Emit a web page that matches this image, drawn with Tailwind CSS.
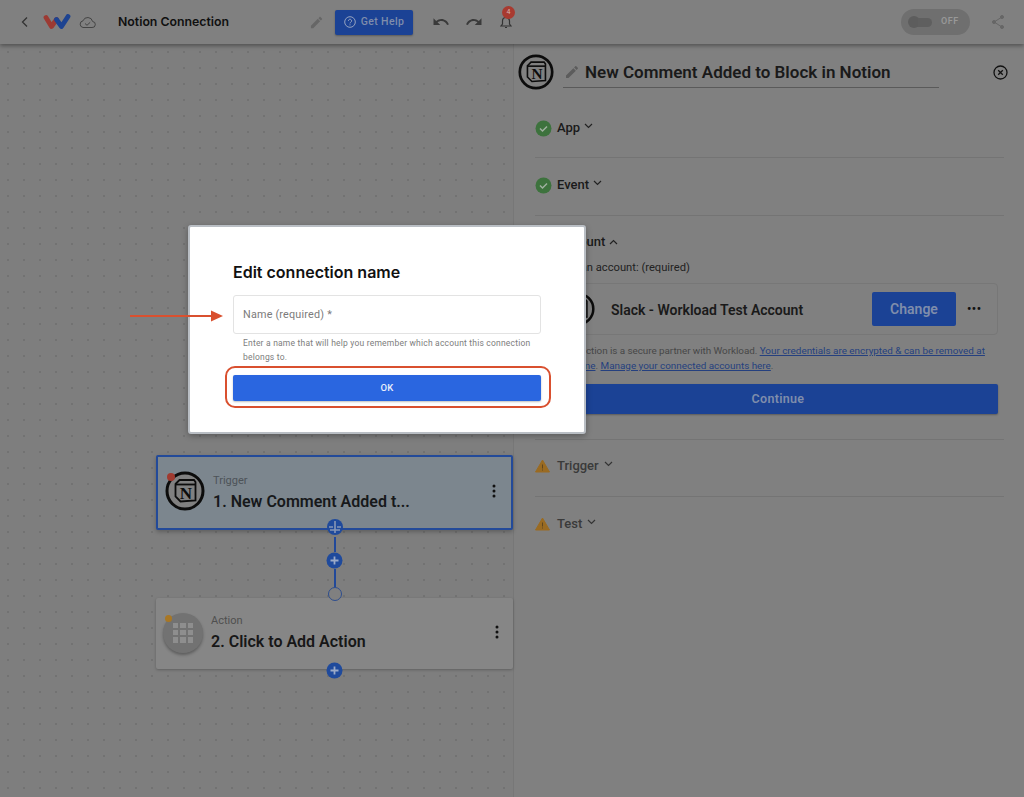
<!DOCTYPE html>
<html>
<head>
<meta charset="utf-8">
<script src="https://cdn.jsdelivr.net/npm/@tailwindcss/browser@4"></script>
</head>
<body class="bg-[#808080]">
<svg class="hidden"><symbol id="notion" viewBox="0 0 40 40"><circle cx="20" cy="20" r="18" fill="#808080" stroke="#0c0c0c" stroke-width="3"/><path d="M10.500 13l4-4h14.500l1.500 2v18.500l-15 1-5-5z" fill="none" stroke="#0c0c0c" stroke-width="1.800"/><path d="M11 13.500h19" stroke="#0c0c0c" stroke-width="1.800"/><text x="21" y="27.500" text-anchor="middle" font-family="Liberation Serif" font-weight="700" font-size="17" fill="#0c0c0c">N</text></symbol></svg>
<div class="relative w-[1024px] h-[797px] overflow-hidden bg-[#808080] font-['Roboto',sans-serif]">

  <header class="relative z-10 h-[44px] flex items-center bg-[#808080] shadow-[0_2px_4px_rgba(0,0,0,0.35)]">
    <svg class="ml-[20px] w-[10px] h-[12px]" viewBox="0 0 10 12" fill="none" stroke="#333" stroke-width="1.300"><path d="M7 1.500L2.500 6 7 10.500"/></svg>
    <svg class="ml-[13px] w-[28px] h-[16px]" viewBox="0 0 28 16" fill="none" stroke-width="4.800" stroke-linejoin="round" stroke-linecap="round"><path d="M3 3.500l5.500 9 5-7" stroke="#9c3a33"/><path d="M13.500 5.500l5 7 6.500-10" stroke="#1d4391"/></svg>
    <svg class="ml-[8px] w-[17px] h-[13px]" viewBox="0 0 17 13" fill="none" stroke="#444" stroke-width="1"><path d="M4 11.500h9a3 3 0 0 0 .6-6A5 5 0 0 0 4 4.800a3.400 3.400 0 0 0 0 6.700z"/><path d="M6 7.500l2 1.800 3.200-3"/></svg>
    <div class="ml-[22px] w-[189px] text-[12.300px] leading-none font-semibold text-[#101010] font-['Inter',sans-serif]">Notion Connection</div>
    <svg class="ml-[2px] w-[15px] h-[15px]" viewBox="0 0 24 24" fill="#666"><path d="M3 17.250V21h3.750L17.810 9.940l-3.750-3.750L3 17.250zM20.710 7.040c.39-.39.39-1.020 0-1.410l-2.340-2.340c-.39-.39-1.020-.39-1.410 0l-1.830 1.830 3.750 3.750 1.830-1.830z"/></svg>
    <button class="ml-[11px] w-[78px] h-[25px] rounded-[2px] bg-[#1b4295] flex items-center justify-center gap-[5px] text-[10.500px] tracking-[0.4px] font-medium text-[#7f8dab] shadow-[0_1px_2px_rgba(0,0,0,0.3)]">
      <svg class="w-[12px] h-[12px]" viewBox="0 0 12 12" fill="none" stroke="#95a3c0" stroke-width="1"><circle cx="6" cy="6" r="5.300"/><path d="M4.400 4.800a1.600 1.600 0 1 1 2.400 1.400c-.6.400-.8.600-.8 1.200M6 8.400v1"/></svg>
      Get Help
    </button>
    <svg class="ml-[19px] w-[18px] h-[18px]" viewBox="0 0 24 24" fill="#3a3a3a"><path d="M12.500 8c-2.650 0-5.050.99-6.900 2.600L2 7v9h9l-3.620-3.620c1.390-1.160 3.160-1.880 5.120-1.880 3.540 0 6.550 2.310 7.600 5.500l2.370-.78C21.080 11.030 17.150 8 12.500 8z"/></svg>
    <svg class="ml-[15px] w-[18px] h-[18px]" viewBox="0 0 24 24" fill="#3a3a3a"><path d="M18.400 10.600C16.550 8.990 14.150 8 11.500 8c-4.650 0-8.580 3.030-9.960 7.220L3.900 16c1.050-3.190 4.050-5.500 7.600-5.500 1.950 0 3.730.72 5.120 1.880L13 16h9V7l-3.600 3.600z"/></svg>
    <div class="relative ml-[17px] w-[12px] h-[14px]">
      <svg class="w-[12px] h-[14px]" viewBox="0 0 12 14" fill="none" stroke="#333" stroke-width="1.200"><path d="M1 11h10l-1.500-2V6a3.500 3.500 0 0 0-7 0v3zM5 12.500h2"/></svg>
      <span class="absolute -top-[9px] left-[2px] w-[13px] h-[13px] rounded-full bg-[#a83a30] text-[7px] leading-[13px] text-center text-[#d8b5b0]">4</span>
    </div>
    <div class="ml-[389px] w-[69px] h-[26px] rounded-full bg-[#6f6f6f] flex items-center pl-[7px]">
      <span class="w-[12px] h-[12px] rounded-full bg-[#5d5d5d]"></span>
      <span class="-ml-[2px] w-[14px] h-[9px] rounded-r-full bg-[#5f5f5f]"></span>
      <span class="ml-[9px] text-[9px] font-semibold tracking-[0.5px] text-[#989898]">OFF</span>
    </div>
    <svg class="ml-[21px] w-[14px] h-[16px]" viewBox="0 0 14 16" fill="#666" stroke="#666"><path d="M11 3L3 8l8 5" fill="none"/><circle cx="11" cy="3" r="1.500"/><circle cx="3" cy="8" r="1.500"/><circle cx="11" cy="13" r="1.500"/></svg>
  </header>

  <main class="flex h-[753px]">
    <section class="w-[513px] h-full pl-[156px] pt-[411px] bg-[#7e7e7e] bg-[radial-gradient(#727272_0.8px,transparent_1px)] bg-[size:16px_16px]">
      <div class="relative w-[357px] h-[75px] border-2 border-[#234a99] rounded-[2px] bg-[#7c868e] flex items-center shadow-[0_2px_4px_rgba(0,0,0,0.25)]">
        <span class="absolute z-10 left-[9px] top-[16px] w-[8px] h-[8px] rounded-full bg-[#a03a30]"></span>
        <svg class="ml-[7px] mb-[3px] w-[40px] h-[40px]"><use href="#notion"/></svg>
        <div class="ml-[8px] flex-1">
          <div class="text-[11px] leading-[14px] text-[#4d5358]">Trigger</div>
          <div class="mt-[4px] text-[16px] leading-[20px] font-semibold text-[#17191b]">1. New Comment Added t...</div>
        </div>
        <svg class="mr-[15px] mb-[4px] w-[4px] h-[14px]" viewBox="0 0 4 14" fill="#111"><circle cx="2" cy="2" r="1.500"/><circle cx="2" cy="7" r="1.500"/><circle cx="2" cy="12" r="1.500"/></svg>
        <svg class="absolute left-[168px] -bottom-[8px] w-[18px] h-[18px]" viewBox="0 0 18 18"><circle cx="9" cy="9" r="8" fill="#1f4a9c"/><path d="M9 3v12M3 9h4M11 9h4M4 12h10" stroke="#8796b5" stroke-width="1.600"/></svg>
      </div>
      <div class="relative z-10 w-[357px] h-[68px] flex flex-col items-center">
        <span class="mt-[7px] w-[2px] h-[15px] shrink-0 bg-[#22499a]"></span>
        <svg class="w-[17px] h-[17px] shrink-0" viewBox="0 0 17 17"><circle cx="8.500" cy="8.500" r="8" fill="#1f4a9c"/><path d="M8.500 4.500v8M4.500 8.500h8" stroke="#9aa9c7" stroke-width="1.800"/></svg>
        <span class="w-[2px] h-[18px] shrink-0 bg-[#22499a]"></span>
        <span class="w-[14px] h-[14px] shrink-0 rounded-full border border-[#2d4d8e] bg-[#808080]"></span>
      </div>
      <div class="relative w-[357px] h-[71px] rounded-[2px] bg-[#868686] flex items-center shadow-[0_1px_3px_rgba(0,0,0,0.25)]">
        <span class="absolute z-10 left-[9px] top-[17px] w-[7px] h-[7px] rounded-full bg-[#a87725]"></span>
        <div class="ml-[7px] mb-[2px] w-[40px] h-[40px] rounded-full bg-[#727272] grid grid-cols-3 grid-rows-3 gap-[2px] p-[10px] shadow-[0_2px_3px_rgba(0,0,0,0.3)]">
          <i class="bg-[#8e8e8e]"></i><i class="bg-[#8e8e8e]"></i><i class="bg-[#8e8e8e]"></i><i class="bg-[#8e8e8e]"></i><i class="bg-[#8e8e8e]"></i><i class="bg-[#8e8e8e]"></i><i class="bg-[#8e8e8e]"></i><i class="bg-[#8e8e8e]"></i><i class="bg-[#8e8e8e]"></i>
        </div>
        <div class="ml-[8px] pb-[1px] flex-1">
          <div class="text-[11px] leading-[14px] text-[#4f4f4f]">Action</div>
          <div class="mt-[4px] text-[16px] leading-[20px] font-semibold text-[#171717]">2. Click to Add Action</div>
        </div>
        <svg class="mr-[14px] mb-[4px] w-[4px] h-[14px]" viewBox="0 0 4 14" fill="#111"><circle cx="2" cy="2" r="1.500"/><circle cx="2" cy="7" r="1.500"/><circle cx="2" cy="12" r="1.500"/></svg>
        <svg class="absolute left-[170px] -bottom-[10px] w-[17px] h-[17px]" viewBox="0 0 17 17"><circle cx="8.500" cy="8.500" r="8" fill="#1f4a9c"/><path d="M8.500 4.500v8M4.500 8.500h8" stroke="#9aa9c7" stroke-width="1.800"/></svg>
      </div>
    </section>

    <aside class="flex-1 h-full border-l border-[#777] bg-[#808080]">
      <div class="h-[56px] flex items-center">
        <svg class="ml-[4px] mt-[-1px] w-[36px] h-[36px] shrink-0"><use href="#notion"/></svg>
        <div class="ml-[9px] w-[376px] h-[32px] flex items-center border-b border-[#5a5a5a]">
          <svg class="ml-[1px] w-[16px] h-[16px]" viewBox="0 0 24 24" fill="#5c5c5c"><path d="M3 17.250V21h3.750L17.810 9.940l-3.750-3.750L3 17.250zM20.710 7.040c.39-.39.39-1.020 0-1.410l-2.340-2.340c-.39-.39-1.020-.39-1.410 0l-1.830 1.830 3.750 3.750 1.830-1.830z"/></svg>
          <span class="ml-[5px] text-[17px] leading-[20px] font-semibold text-[#1a1a1a] whitespace-nowrap">New Comment Added to Block in Notion</span>
        </div>
        <svg class="ml-[54px] w-[15px] h-[15px]" viewBox="0 0 15 15" fill="none" stroke="#111" stroke-width="1.300"><circle cx="7.500" cy="7.500" r="6.500"/><path d="M5.200 5.200l4.600 4.600M9.800 5.200l-4.600 4.600"/></svg>
      </div>

      <div class="mx-[21px] w-[469px]">
        <div class="h-[58px] pt-[19px] border-b border-[#747474] flex items-start gap-[5px]">
          <svg class="mt-[1px] w-[17px] h-[17px]" viewBox="0 0 17 17"><circle cx="8.500" cy="8.500" r="8" fill="#3d723d"/><path d="M5 8.500l2.500 2.500L12 6.500" fill="none" stroke="#a0b0a0" stroke-width="1.500"/></svg>
          <span class="text-[13px] leading-[18px] font-medium text-[#1a1a1a]">App</span>
          <svg class="mt-[4px] -ml-[1px] w-[9px] h-[6px]" viewBox="0 0 9 6" fill="none" stroke="#222" stroke-width="1.200"><path d="M1 1l3.500 3.500L8 1"/></svg>
        </div>
        <div class="h-[58px] pt-[18px] border-b border-[#747474] flex items-start gap-[5px]">
          <svg class="mt-[1px] w-[17px] h-[17px]" viewBox="0 0 17 17"><circle cx="8.500" cy="8.500" r="8" fill="#3d723d"/><path d="M5 8.500l2.500 2.500L12 6.500" fill="none" stroke="#a0b0a0" stroke-width="1.500"/></svg>
          <span class="text-[13px] leading-[18px] font-medium text-[#1a1a1a]">Event</span>
          <svg class="mt-[4px] -ml-[1px] w-[9px] h-[6px]" viewBox="0 0 9 6" fill="none" stroke="#222" stroke-width="1.200"><path d="M1 1l3.500 3.500L8 1"/></svg>
        </div>
        <div class="h-[224px] pt-[17px] border-b border-[#747474]">
          <div class="flex items-center gap-[5px] h-[18px] pl-[22px]">
            <span class="text-[13px] font-medium text-[#1a1a1a]">Account</span>
            <svg class="-ml-[1px] w-[9px] h-[6px]" viewBox="0 0 9 6" fill="none" stroke="#222" stroke-width="1.200"><path d="M1 5l3.500-3.500L8 5"/></svg>
          </div>
          <div class="mt-[10px] pl-[5px] text-[11.200px] leading-[14px] font-normal text-[#222]">Choose an account: (required)</div>
          <div class="ml-[23px] mt-[8px] w-[440px] h-[52px] border border-[#777] rounded-[4px] flex items-center">
            <svg class="ml-[2px] w-[34px] h-[34px] shrink-0"><use href="#notion"/></svg>
            <span class="ml-[16px] mt-[2px] w-[261px] text-[14px] font-semibold text-[#1a1a1a] whitespace-nowrap">Slack - Workload Test Account</span>
            <button class="w-[84px] h-[34px] rounded-[2px] bg-[#1b4295] text-[14px] font-semibold text-[#7f8dab]">Change</button>
            <span class="ml-[11px] text-[12px] leading-none font-bold tracking-[0.5px] text-[#111]">•••</span>
          </div>
          <p class="ml-[23px] mt-[8px] w-[440px] text-[9.900px] leading-[15px] text-[#474747]"><span class="tracking-[-0.05px]">Connection is a secure partner with Workload. </span><a class="underline text-[#25407f]">Your credentials are encrypted &amp; can be removed at any time</a>. <a class="underline text-[#25407f]">Manage your connected accounts here</a>.</p>
          <button class="ml-[23px] mt-[11px] w-[440px] h-[30px] rounded-[2px] bg-[#1b4295] text-[12.500px] font-semibold tracking-[0.3px] text-[#7f8dab] shadow-[0_1px_2px_rgba(0,0,0,0.3)]">Continue</button>
        </div>
        <div class="h-[57px] pt-[17px] border-b border-[#747474] flex items-start gap-[7px]">
          <svg class="mt-[2px] w-[15px] h-[14px]" viewBox="0 0 15 14"><path d="M7.500 1L14.500 13H.5z" fill="#9a6b22" stroke="#9a6b22" stroke-linejoin="round"/><path d="M7.500 5.500v4M7.500 10.500v1" stroke="#5e4620" stroke-width="1"/></svg>
          <span class="text-[13px] leading-[18px] font-medium text-[#3a3a3a]">Trigger</span>
          <svg class="mt-[4px] -ml-[2px] w-[9px] h-[6px]" viewBox="0 0 9 6" fill="none" stroke="#333" stroke-width="1.200"><path d="M1 1l3.500 3.500L8 1"/></svg>
        </div>
        <div class="pt-[18px] flex items-start gap-[7px]">
          <svg class="mt-[2px] w-[15px] h-[14px]" viewBox="0 0 15 14"><path d="M7.500 1L14.500 13H.5z" fill="#9a6b22" stroke="#9a6b22" stroke-linejoin="round"/><path d="M7.500 5.500v4M7.500 10.500v1" stroke="#5e4620" stroke-width="1"/></svg>
          <span class="text-[13px] leading-[18px] font-medium text-[#3a3a3a]">Test</span>
          <svg class="mt-[4px] -ml-[2px] w-[9px] h-[6px]" viewBox="0 0 9 6" fill="none" stroke="#333" stroke-width="1.200"><path d="M1 1l3.500 3.500L8 1"/></svg>
        </div>
      </div>
    </aside>
  </main>

  <!-- modal -->
  <div class="absolute z-20 left-[188px] top-[225px] w-[398px] h-[209px] rounded-[3px] bg-white border-2 border-[#b9bec4] px-[43px] pt-[35px] shadow-[0_2px_6px_rgba(0,0,0,0.3)]">
    <h2 class="text-[16px] leading-[20px] font-semibold text-[#111] font-['Inter',sans-serif]">Edit connection name</h2>
    <div class="mt-[13px] w-[308px] h-[39px] border border-[#e3e3e3] rounded-[3px] pl-[9px] pt-[1px] flex items-center text-[10.800px] tracking-[0.2px] text-[#7b7b7b]">Name (required) *</div>
    <p class="mt-[2px] pl-[10px] w-[308px] text-[8.500px] leading-[14px] tracking-[0.2px] text-[#7d7d7d]">Enter a name that will help you remember which account this connection belongs to.</p>
    <button class="relative mt-[11px] block w-[308px] h-[26px] rounded-[2px] bg-[#2a66e0] text-[9.500px] font-medium tracking-[0.3px] text-[#e8eefb] shadow-[0_1px_2px_rgba(0,0,0,0.25)]">OK
      <span class="absolute -left-[8px] -right-[10px] -top-[9px] -bottom-[7px] rounded-[10px] border-2 border-[#d9502f]"></span>
    </button>
  </div>

  <!-- annotation arrow -->
  <svg class="absolute z-30 left-[130px] top-[308px] w-[94px] h-[16px]" viewBox="0 0 94 16"><path d="M0 8h84" stroke="#d9502f" stroke-width="2"/><path d="M81 2.500l12 5.500-12 5.500z" fill="#d9502f"/></svg>
</div>
</body>
</html>
